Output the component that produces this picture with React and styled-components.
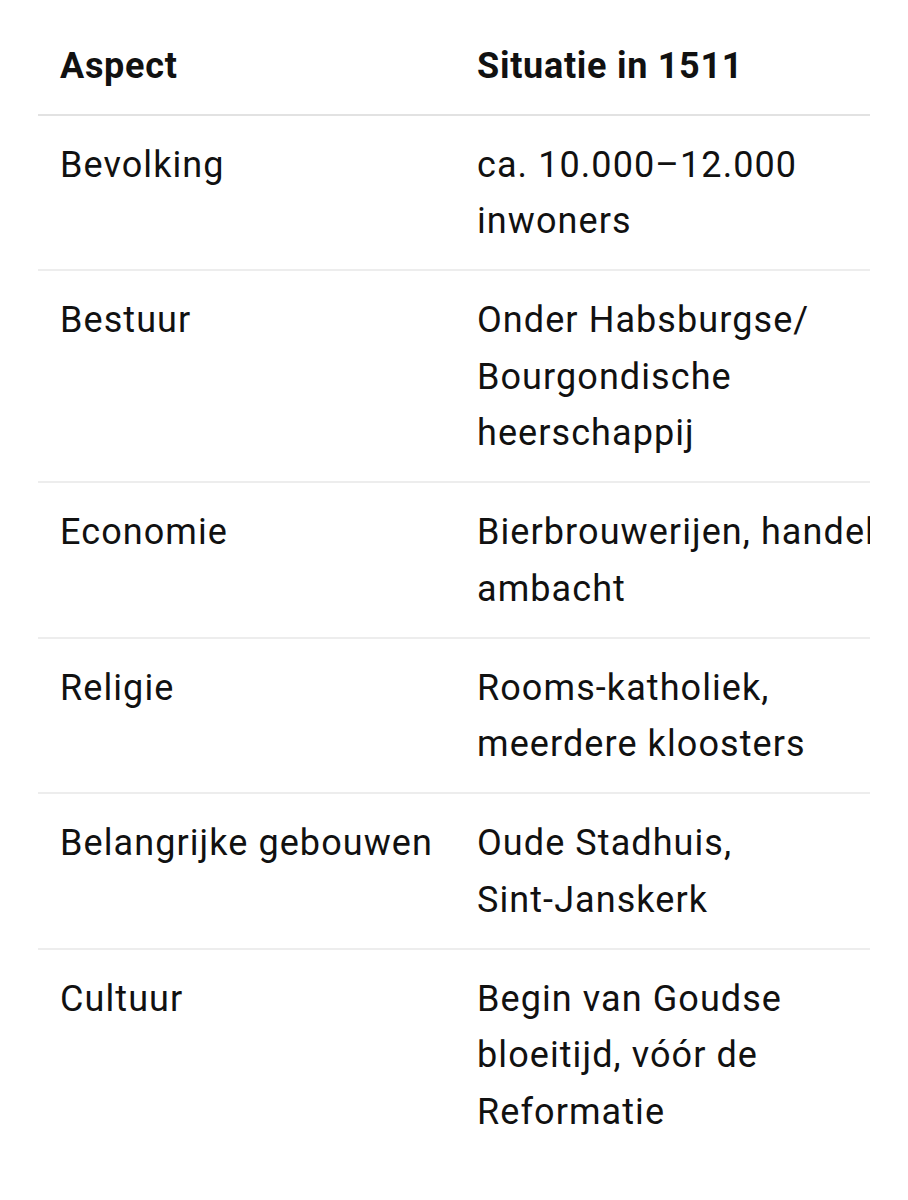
import React from "react";
import styled, { createGlobalStyle } from "styled-components";

const Global = createGlobalStyle`
  html, body { margin: 0; padding: 0; background: #ffffff; }
  body { font-family: Roboto, "Noto Sans", Arial, sans-serif; color: #111111; }
`;

const Page = styled.div`
  padding: 16px 38px 0 38px;
`;

const Scroller = styled.div`
  width: 832px;
  overflow: hidden;
`;

const Table = styled.table`
  border-collapse: collapse;
  table-layout: fixed;
  width: 877px;
  font-size: 36px;
  line-height: 56.5px;
  letter-spacing: 0.03em;
`;

const Col = styled.col`
  width: ${(p) => p.$w}px;
`;

const HeadCell = styled.th`
  box-sizing: border-box;
  text-align: left;
  font-weight: 700;
  letter-spacing: 0.02em;
  padding: 22px 22px 19px 22px;
  border-bottom: 2px solid #e2e2e2;
  vertical-align: top;
`;

const Row = styled.tr`
  border-bottom: ${(p) => (p.$last ? "none" : "2px solid #ededed")};
`;

const Cell = styled.td`
  box-sizing: border-box;
  padding: 21px 22px 19.5px 22px;
  vertical-align: top;
  font-weight: 400;
  color: #111111;
`;

const NoWrap = styled.span`
  white-space: nowrap;
`;

const rows = [
  ["Bevolking", "ca. 10.000–12.000 inwoners"],
  ["Bestuur", "Onder Habsburgse/\u200BBourgondische heerschappij"],
  ["Economie", "Bierbrouwerijen, handel, ambacht"],
  ["Religie", <>Rooms-katholiek, meerdere kloosters</>],
  ["Belangrijke gebouwen", <>Oude Stadhuis, <NoWrap>Sint-Janskerk</NoWrap></>],
  ["Cultuur", "Begin van Goudse bloeitijd, vóór de Reformatie"],
];

export default function App() {
  return (
    <Page>
      <Global />
      <Scroller>
        <Table>
          <colgroup>
            <Col $w={417} />
            <Col $w={460} />
          </colgroup>
          <thead>
            <tr>
              <HeadCell>Aspect</HeadCell>
              <HeadCell>Situatie in 1511</HeadCell>
            </tr>
          </thead>
          <tbody>
            {rows.map(([a, b], i) => (
              <Row key={a} $last={i === rows.length - 1}>
                <Cell>{a}</Cell>
                <Cell>{b}</Cell>
              </Row>
            ))}
          </tbody>
        </Table>
      </Scroller>
    </Page>
  );
}
